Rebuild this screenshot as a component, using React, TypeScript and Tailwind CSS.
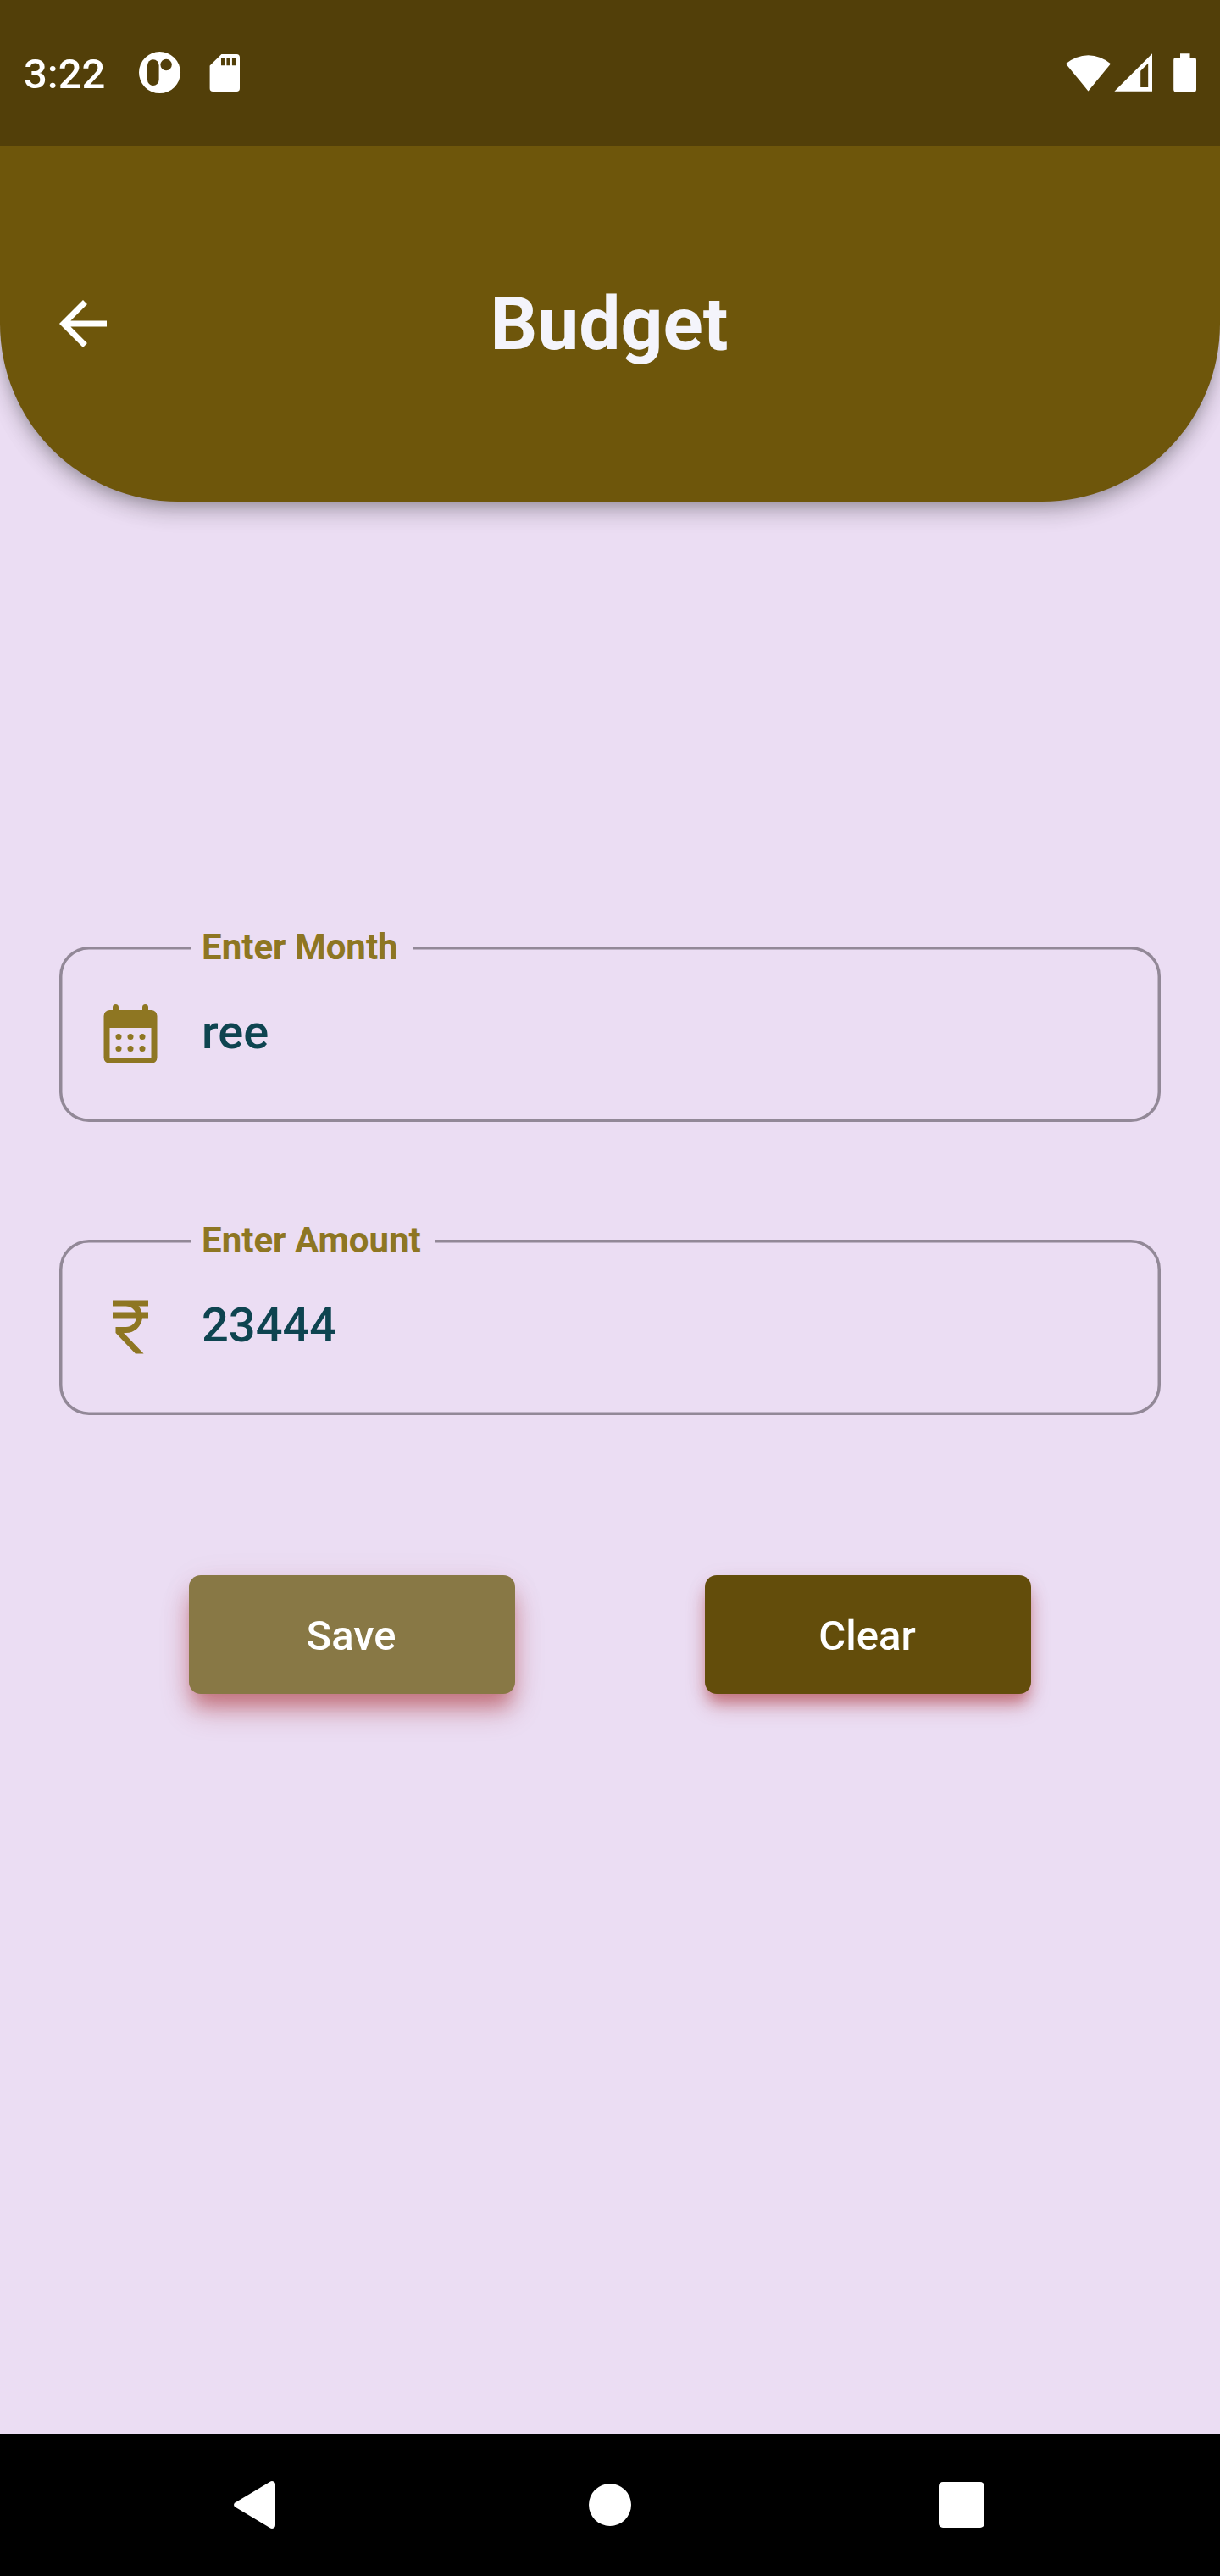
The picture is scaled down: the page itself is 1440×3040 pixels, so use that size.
import React from "react";

function StatusBar() {
  return (
    <div className="flex h-[172px] items-start justify-between bg-[#523f09] pl-[28px] pr-[28px] pt-[60px] text-white">
      <div className="flex h-[56px] items-center">
        <span className="w-[136px] text-[49px] font-medium leading-[56px]">3:22</span>
        <svg className="-mt-[4px] h-[50px] w-[50px]" viewBox="0 0 50 50">
          <circle cx="24.5" cy="24.6" r="24.5" fill="#fff" />
          <rect x="10" y="9.3" width="13.6" height="30.8" rx="6.8" fill="#523f09" />
          <circle cx="32.1" cy="15.5" r="6.7" fill="#523f09" />
        </svg>
        <svg className="-mt-[4px] ml-[33px] h-[46px] w-[37px]" viewBox="0 0 37 46">
          <path
            fill="#fff"
            fillRule="evenodd"
            d="M14.4 1H32.2Q36 1 36 4.8V41.2Q36 45 32.2 45H4.4Q.6 45 .6 41.2V14.5ZM14 5.3V14.2H18.6V5.3ZM20.4 5.3V14.2H25V5.3ZM26.9 5.3V14.2H31.5V5.3Z"
          />
        </svg>
      </div>
      <svg className="mt-[2px] h-[48px] w-[155px]" viewBox="0 0 155 48" fill="#fff">
        <path d="M27.5 45.5 1 13.2A40.5 40.5 0 0 1 54 13.2Z" />
        <path fillRule="evenodd" d="M103 1.2V45.8H58.4ZM98.2 12.8 89.2 21.8V41H98.2Z" />
        <path d="M131.7 5.9H136V1.2H147.5V5.9H152Q155 5.9 155 8.9V43.6Q155 46.6 152 46.6H131.2Q128.2 46.6 128.2 43.6V8.9Q128.2 5.9 131.2 5.9Z" />
      </svg>
    </div>
  );
}

function Header() {
  return (
    <header className="rounded-b-[210px] bg-[#6e560b] shadow-[0_7px_14px_-3.5px_rgba(0,0,0,0.16),0_14px_24px_rgba(0,0,0,0.16),0_3.5px_35px_rgba(0,0,0,0.09)]">
      <StatusBar />
      <div className="grid h-[420px] grid-cols-[140px_1fr_142px] items-center pl-[56px] pr-[56px]">
        <svg className="h-[84px] w-[84px]" viewBox="0 0 24 24" fill="#fff">
          <path d="M20 11H7.83l5.59-5.59L12 4l-8 8 8 8 1.41-1.41L7.83 13H20v-2z" />
        </svg>
        <h1 className="text-center text-[87.5px] font-bold leading-[105px] text-[#f4f4fb]">Budget</h1>
      </div>
    </header>
  );
}

function CalendarIcon() {
  return (
    <svg className="h-[84px] w-[84px]" viewBox="0 0 24 24" fill="#8e7622">
      <path
        fillRule="evenodd"
        d="M5 4H6V3A1 1 0 0 1 8 3V4H16V3A1 1 0 0 1 18 3V4H19A2 2 0 0 1 21 6V20A2 2 0 0 1 19 22H5A2 2 0 0 1 3 20V6A2 2 0 0 1 5 4ZM5 10V20H19V10Z"
      />
      <circle cx="8" cy="13" r="1" />
      <circle cx="12" cy="13" r="1" />
      <circle cx="16" cy="13" r="1" />
      <circle cx="8" cy="17" r="1" />
      <circle cx="12" cy="17" r="1" />
      <circle cx="16" cy="17" r="1" />
    </svg>
  );
}

function RupeeIcon() {
  return (
    <svg className="h-[84px] w-[84px]" viewBox="0 0 24 24" fill="#8e7622">
      <path d="M13.66 7C13.1 5.82 11.9 5 10.5 5H6V3h12v2h-3.26c.48.58.84 1.26 1.05 2H18v2h-2.02c-.25 2.8-2.61 5-5.48 5h-.77l6.73 7h-2.77L7 14v-2h3.5c1.76 0 3.22-1.3 3.46-3H6V7h7.66z" />
    </svg>
  );
}

type FieldProps = {
  label: string;
  value: string;
  icon: React.ReactNode;
  labelClass: string;
};

function Field({ label, value, icon, labelClass }: FieldProps) {
  return (
    <div className="relative flex h-[206.5px] items-center rounded-[35px] pl-[42px] shadow-[inset_0_0_0_3.5px_#928897]">
      <span
        className={`absolute -top-[24px] left-[156px] bg-[#ebddf3] pl-[12px] text-[42px] font-bold leading-[50px] text-[#8e7622] ${labelClass}`}
      >
        {label}
      </span>
      {icon}
      <span className="-mt-[4px] ml-[42px] text-[56px] font-medium leading-[66px] text-[#0e4450]">{value}</span>
    </div>
  );
}

function NavBar() {
  return (
    <nav className="flex h-[168px] items-center bg-black">
      <svg className="ml-[275px] h-[58px] w-[51px]" viewBox="0 0 51 58" fill="#fff">
        <path d="M2.8 26.2 43.8 1.7Q46 .4 48.3 1.7Q50 2.8 50 5V53Q50 55.2 48.3 56.3Q46 57.6 43.8 56.3L2.8 31.8Q1 30.6 1 29Q1 27.4 2.8 26.2Z" />
      </svg>
      <div className="ml-[369px] size-[50px] rounded-full bg-white" />
      <div className="ml-[363px] size-[54px] rounded-[5px] bg-white" />
    </nav>
  );
}

export default function App() {
  return (
    <div className="flex h-[3040px] w-[1440px] flex-col overflow-hidden bg-[#ebddf3] font-['Roboto',sans-serif]">
      <Header />
      <main className="flex flex-1 flex-col px-[70px] pt-[525px]">
        <Field label="Enter Month" value="ree" icon={<CalendarIcon />} labelClass="w-[261px]" />
        <div className="h-[139.5px]" />
        <Field label="Enter Amount" value="23444" icon={<RupeeIcon />} labelClass="w-[288px]" />
        <div className="mt-[189.5px] flex justify-between pl-[153px] pr-[153px]">
          <button className="h-[140px] w-[385px] rounded-[14px] bg-[#887845] pr-[2px] pt-[4px] text-[49px] font-medium text-white shadow-[0_18px_22px_-5px_rgba(160,20,20,0.36),0_22px_36px_-2px_rgba(160,20,20,0.24),0_4px_40px_rgba(160,20,20,0.06)]">
            Save
          </button>
          <button className="h-[140px] w-[385px] rounded-[14px] bg-[#634d0b] pr-[2px] pt-[4px] text-[49px] font-medium text-white shadow-[0_13px_16px_-4px_rgba(160,20,20,0.36),0_16px_26px_-2px_rgba(160,20,20,0.24),0_4px_28px_rgba(160,20,20,0.06)]">
            Clear
          </button>
        </div>
      </main>
      <NavBar />
    </div>
  );
}
